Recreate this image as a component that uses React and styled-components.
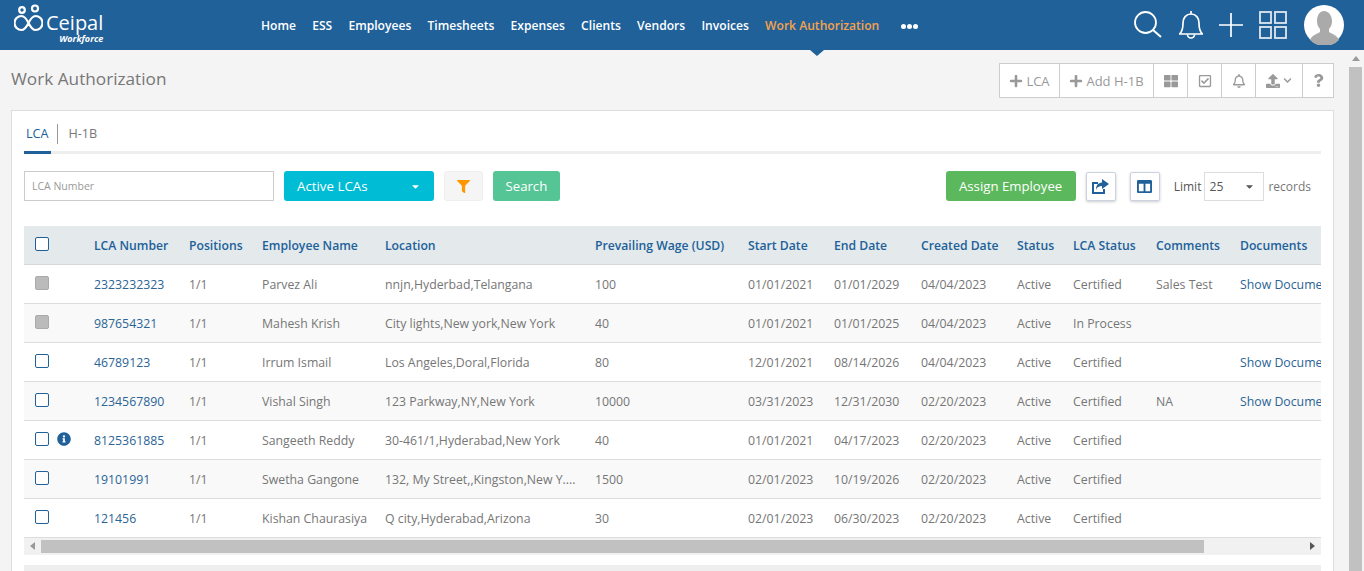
import React from "react";
import styled, { createGlobalStyle } from "styled-components";
import { FaPlus, FaThLarge, FaRegCheckSquare, FaRegBell, FaUpload, FaChevronDown, FaQuestion, FaFilter, FaColumns, FaInfoCircle, FaCaretDown } from "react-icons/fa";

const Global = createGlobalStyle`
  html, body { margin: 0; padding: 0; height: 100%; overflow: hidden; }
  body { font-family: "Open Sans", "Noto Sans", sans-serif; font-size: 12px; color: #777; background: #f4f4f4; }
  * { box-sizing: border-box; }
`;

const Header = styled.header`
  position: relative;
  height: 50px;
  background: #20619a;
  display: flex;
  align-items: center;
  color: #fff;
`;

const Logo = styled.div`
  width: 253px;
  padding-left: 14px;
  display: flex;
  align-items: flex-start;
  height: 50px;
  padding-top: 4px;
`;

const LogoText = styled.div`
  display: flex;
  flex-direction: column;
  align-items: flex-end;
  margin-left: 3px;
  margin-top: 8px;
`;

const LogoName = styled.span`
  font-size: 20px;
  line-height: 22px;
  font-weight: 400;
`;

const LogoSub = styled.span`
  font-size: 9px;
  line-height: 10px;
  font-weight: 700;
  font-style: italic;
`;

const Nav = styled.nav`
  display: flex;
  align-items: center;
  gap: 16.2px;
  padding-left: 8px;
  flex: 1;
`;

const NavItem = styled.a`
  font-size: 12.1px;
  font-weight: 600;
  color: ${(p) => (p.$active ? "#f5a24b" : "#fff")};
`;

const Dots = styled.span`
  display: flex;
  gap: 1px;
  margin-left: 5px;
  margin-top: 3px;
  i { width: 5px; height: 5px; border-radius: 50%; background: #fff; }
`;

const NavCaret = styled.span`
  position: absolute;
  left: 810px;
  top: 50px;
  border-left: 7px solid transparent;
  border-right: 7px solid transparent;
  border-top: 6px solid #20619a;
`;

const HeadIcons = styled.div`
  display: flex;
  align-items: center;
  gap: 16px;
  padding-right: 20px;
`;

const Page = styled.div`
  display: flex;
  height: 521px;
  overflow: hidden;
`;

const Main = styled.main`
  width: 1347px;
  padding: 13px 13px 0 11px;
`;

const TopRow = styled.div`
  display: flex;
  justify-content: space-between;
  height: 47px;
`;

const Title = styled.h1`
  margin: 6px 0 0;
  font-size: 17.2px;
  line-height: 20px;
  font-weight: 400;
  color: #777;
`;

const ActionBar = styled.div`
  display: flex;
  height: 35px;
  border: 1px solid #ccc;
  background: #fff;
`;

const ActionBtn = styled.div`
  width: ${(p) => p.$w}px;
  display: flex;
  align-items: center;
  justify-content: center;
  gap: 3px;
  color: #999;
  font-size: 13px;
  border-left: ${(p) => (p.$first ? "none" : "1px solid #ccc")};
`;

const Card = styled.section`
  background: #fff;
  border: 1px solid #ddd;
  border-bottom: none;
  padding: 0 12px;
  height: 470px;
`;

const Tabs = styled.div`
  display: flex;
  align-items: center;
  height: 43px;
  border-bottom: 3px solid #eee;
  position: relative;
  padding-top: 5px;
`;

const Tab = styled.span`
  font-size: 12.6px;
  padding: 0 9px 0 2px;
  color: ${(p) => (p.$active ? "#20619a" : "#777")};
  height: 20px;
  line-height: 20px;
  & + & { border-left: 1px solid #999; padding-left: 10px; }
`;

const TabBar = styled.span`
  position: absolute;
  left: 0;
  bottom: -3px;
  width: 27px;
  height: 3px;
  background: #20619a;
`;

const Tools = styled.div`
  display: flex;
  align-items: center;
  height: 30px;
  margin-top: 17px;
`;

const SearchInput = styled.input`
  width: 250px;
  height: 30px;
  border: 1px solid #ccc;
  padding: 0 7px;
  font: 10.5px "Open Sans", sans-serif;
  outline: none;
  &::placeholder { color: #999; opacity: 1; }
`;

const StatusSelect = styled.div`
  width: 150px;
  height: 30px;
  margin-left: 10px;
  border-radius: 3px;
  background: #00bcd4;
  color: #fff;
  font-size: 13.3px;
  display: flex;
  align-items: center;
  justify-content: space-between;
  padding: 0 13px;
`;

const FilterBtn = styled.div`
  width: 39px;
  height: 30px;
  margin-left: 10px;
  border: 1px solid #eee;
  border-radius: 3px;
  background: #f5f5f5;
  color: #ff9800;
  font-size: 13px;
  display: flex;
  align-items: center;
  justify-content: center;
`;

const Btn = styled.div`
  height: 30px;
  padding: 0 ${(p) => p.$pad}px;
  margin-left: 10px;
  border-radius: 3px;
  background: ${(p) => p.$bg};
  color: #fff;
  font-size: 13.2px;
  display: flex;
  align-items: center;
`;

const Spacer = styled.div`
  flex: 1;
`;

const IconBtn = styled.div`
  width: 30px;
  height: 29px;
  margin-left: ${(p) => p.$ml}px;
  border: 1px solid #ccd3e0;
  border-radius: 2px;
  box-shadow: 0 1px 3px rgba(0, 0, 0, 0.2);
  background: #fff;
  color: #20619a;
  font-size: 15px;
  display: flex;
  align-items: center;
  justify-content: center;
`;

const LimitText = styled.span`
  font-size: 12px;
  color: ${(p) => p.$c};
  margin: ${(p) => p.$m};
`;

const LimitSelect = styled.div`
  width: 60px;
  height: 29px;
  border: 1px solid #ddd;
  color: #555;
  font-size: 12.2px;
  display: flex;
  align-items: center;
  justify-content: space-between;
  padding: 0 8px 0 4px;
`;

const TableWrap = styled.div`
  margin-top: 25px;
  overflow: hidden;
  width: 1297px;
`;

const Table = styled.table`
  table-layout: fixed;
  border-collapse: collapse;
  width: 1380px;
  font-size: 12.3px;
`;

const Th = styled.th`
  height: 38px;
  padding: 1px 0 0 12px;
  text-align: left;
  font-weight: 600;
  font-size: 12.2px;
  color: #20619a;
  background: #e4e9ec;
  border-bottom: 1px solid #d5d9dc;
  white-space: nowrap;
`;

const Tr = styled.tr`
  background: ${(p) => (p.$odd ? "#f9f9f9" : "#fff")};
`;

const Td = styled.td`
  height: 39px;
  padding: 1px 0 0 12px;
  border-bottom: 1px solid #ddd;
  color: ${(p) => (p.$link ? "#2a6496" : "#767676")};
  white-space: nowrap;
  overflow: hidden;
`;

const CheckCell = styled.div`
  display: flex;
  align-items: center;
  gap: 8px;
  margin-left: -1px;
  position: relative;
  top: -1px;
`;

const Check = styled.span`
  width: 14px;
  height: 14px;
  border-radius: 2px;
  border: 1px solid ${(p) => (p.$off ? "#aaa" : "#20619a")};
  background: ${(p) => (p.$off ? "#bbb" : "#fff")};
`;

const HScroll = styled.div`
  height: 17px;
  background: #f1f1f1;
  display: flex;
  align-items: center;
`;

const Arrow = styled.span`
  width: 17px;
  display: flex;
  justify-content: center;
  &::before {
    content: "";
    border-top: 4px solid transparent;
    border-bottom: 4px solid transparent;
    ${(p) => (p.$right ? "border-left: 5px solid #555;" : "border-right: 5px solid #999;")}
  }
`;

const Thumb = styled.span`
  width: ${(p) => p.$w}px;
  height: 13px;
  background: #c1c1c1;
`;

const Strip = styled.div`
  margin-top: 10px;
  height: 20px;
  background: #eee;
`;

const VScroll = styled.aside`
  width: 17px;
  background: #f4f4f4;
  display: flex;
  flex-direction: column;
  align-items: center;
`;

const UpArrow = styled.span`
  margin-top: 6px;
  border-left: 4px solid transparent;
  border-right: 4px solid transparent;
  border-bottom: 5px solid #999;
`;

const VThumb = styled.span`
  flex: 1;
  width: 13px;
  margin-top: 6px;
  background: #c1c1c1;
`;

const navItems = ["Home", "ESS", "Employees", "Timesheets", "Expenses", "Clients", "Vendors", "Invoices"];

const columns = [
  ["", 58], ["LCA Number", 95], ["Positions", 73], ["Employee Name", 123], ["Location", 210],
  ["Prevailing Wage (USD)", 153], ["Start Date", 86], ["End Date", 87], ["Created Date", 96],
  ["Status", 56], ["LCA Status", 83], ["Comments", 84], ["Documents", 176],
];

const rows = [
  { off: true, n: "2323232323", name: "Parvez Ali", loc: "nnjn,Hyderbad,Telangana", wage: "100", s: "01/01/2021", e: "01/01/2029", c: "04/04/2023", st: "Certified", com: "Sales Test", doc: true },
  { off: true, n: "987654321", name: "Mahesh Krish", loc: "City lights,New york,New York", wage: "40", s: "01/01/2021", e: "01/01/2025", c: "04/04/2023", st: "In Process" },
  { n: "46789123", name: "Irrum Ismail", loc: "Los Angeles,Doral,Florida", wage: "80", s: "12/01/2021", e: "08/14/2026", c: "04/04/2023", st: "Certified", doc: true },
  { n: "1234567890", name: "Vishal Singh", loc: "123 Parkway,NY,New York", wage: "10000", s: "03/31/2023", e: "12/31/2030", c: "02/20/2023", st: "Certified", com: "NA", doc: true },
  { info: true, n: "8125361885", name: "Sangeeth Reddy", loc: "30-461/1,Hyderabad,New York", wage: "40", s: "01/01/2021", e: "04/17/2023", c: "02/20/2023", st: "Certified" },
  { n: "19101991", name: "Swetha Gangone", loc: "132, My Street,,Kingston,New Y....", wage: "1500", s: "02/01/2023", e: "10/19/2026", c: "02/20/2023", st: "Certified" },
  { n: "121456", name: "Kishan Chaurasiya", loc: "Q city,Hyderabad,Arizona", wage: "30", s: "02/01/2023", e: "06/30/2023", c: "02/20/2023", st: "Certified" },
];

const LogoMark = () => (
  <svg width="29" height="29" viewBox="0 0 29 29" fill="none" stroke="#fff" strokeWidth="2.2">
    <circle cx="8" cy="6" r="2.8" />
    <circle cx="21" cy="4.500" r="3" />
    <path d="M14.500 19c-2-4-4-7-7-7a7 7 0 0 0 0 14c3 0 5-3 7-7s4-7 7-7a7 7 0 0 1 0 14c-3 0-5-3-7-7z" />
  </svg>
);

const ShareIcon = () => (
  <svg width="17" height="15" viewBox="0 0 17 15" fill="#20619a">
    <path d="M0 3h6v2H2v8h9v-3h2v5H0z" />
    <path d="M10 0l7 5-7 5V7C7 7 5 8 4 11c0-5 2-7 6-7.500z" />
  </svg>
);

const HeaderIcons = () => (
  <HeadIcons>
    <svg width="30" height="30" viewBox="0 0 30 30" fill="none" stroke="#fff" strokeWidth="1.8">
      <circle cx="12.5" cy="12.5" r="10.5" />
      <path d="M20 20l8 7" strokeWidth="2" />
    </svg>
    <svg width="24" height="32" viewBox="1 0 24 32" fill="none" stroke="#fff" strokeWidth="1.7">
      <path d="M13 2v3M13 5c-5 0-8 4-8 9 0 6-1 9-3.500 11h23c-2.500-2-3.500-5-3.500-11 0-5-3-9-8-9z" />
      <path d="M9.500 25.500a3.500 3.500 0 0 0 7 0" />
    </svg>
    <svg width="24" height="24" viewBox="0 0 24 24" stroke="#fff" strokeWidth="1.7">
      <path d="M12 0v24M0 12h24" />
    </svg>
    <svg width="29" height="29" viewBox="0 0 29 29" fill="none" stroke="#dfe7f0" strokeWidth="1.8">
      <rect x="1" y="1" width="11" height="11" />
      <rect x="16" y="1" width="11" height="11" />
      <rect x="1" y="16" width="11" height="11" />
      <rect x="16" y="16" width="11" height="11" />
    </svg>
    <svg width="40" height="40" viewBox="0 0 40 40">
      <circle cx="20" cy="20" r="20" fill="#fff" />
      <path d="M6 35c2-5 7-6 10-8v-3c-2-2-3-5-3-8 0-6 3-10 7-10s8 4 8 10c0 3-1 6-3 8v3c3 2 8 3 10 8a20 20 0 0 1-29 0z" fill="#aaa" />
    </svg>
  </HeadIcons>
);

const App = () => {
  return (
    <>
      <Global />
      <Header>
        <Logo>
          <LogoMark />
          <LogoText>
            <LogoName>Ceipal</LogoName>
            <LogoSub>Workforce</LogoSub>
          </LogoText>
        </Logo>
        <Nav>
          {navItems.map((n) => <NavItem key={n}>{n}</NavItem>)}
          <NavItem $active>Work Authorization</NavItem>
          <Dots><i /><i /><i /></Dots>
        </Nav>
        <NavCaret />
        <HeaderIcons />
      </Header>
      <Page>
        <Main>
          <TopRow>
            <Title>Work Authorization</Title>
            <ActionBar>
              <ActionBtn $first $w={59}><FaPlus size={14} />LCA</ActionBtn>
              <ActionBtn $w={94}><FaPlus size={14} />Add H-1B</ActionBtn>
              <ActionBtn $w={34}><FaThLarge size={14} /></ActionBtn>
              <ActionBtn $w={34}><FaRegCheckSquare size={14} /></ActionBtn>
              <ActionBtn $w={34}><FaRegBell size={14} /></ActionBtn>
              <ActionBtn $w={47}><FaUpload size={14} /><FaChevronDown size={9} /></ActionBtn>
              <ActionBtn $w={31}><FaQuestion size={13} /></ActionBtn>
            </ActionBar>
          </TopRow>
          <Card>
            <Tabs>
              <Tab $active>LCA<TabBar /></Tab>
              <Tab>H-1B</Tab>
            </Tabs>
            <Tools>
              <SearchInput placeholder="LCA Number" />
              <StatusSelect>Active LCAs<FaCaretDown size={11} /></StatusSelect>
              <FilterBtn><FaFilter /></FilterBtn>
              <Btn $bg="#56c596" $pad={12.5}>Search</Btn>
              <Spacer />
              <Btn $bg="#5cb85c" $pad={13.5}>Assign Employee</Btn>
              <IconBtn $ml={10}><ShareIcon /></IconBtn>
              <IconBtn $ml={14}><FaColumns /></IconBtn>
              <LimitText $c="#555" $m="0 3px 0 14px">Limit</LimitText>
              <LimitSelect>25<FaCaretDown size={11} /></LimitSelect>
              <LimitText $c="#777" $m="0 10px 0 4px">records</LimitText>
            </Tools>
            <TableWrap>
              <Table>
                <colgroup>
                  {columns.map(([h, w], i) => <col key={i} style={{ width: w }} />)}
                </colgroup>
                <thead>
                  <tr>
                    {columns.map(([h], i) => (
                      <Th key={i}>{i === 0 ? <CheckCell><Check /></CheckCell> : h}</Th>
                    ))}
                  </tr>
                </thead>
                <tbody>
                  {rows.map((r, i) => (
                    <Tr key={r.n} $odd={i % 2 === 1}>
                      <Td>
                        <CheckCell>
                          <Check $off={r.off} />
                          {r.info && <FaInfoCircle size={14} color="#20619a" />}
                        </CheckCell>
                      </Td>
                      <Td $link>{r.n}</Td>
                      <Td>1/1</Td>
                      <Td>{r.name}</Td>
                      <Td>{r.loc}</Td>
                      <Td>{r.wage}</Td>
                      <Td>{r.s}</Td>
                      <Td>{r.e}</Td>
                      <Td>{r.c}</Td>
                      <Td>Active</Td>
                      <Td>{r.st}</Td>
                      <Td>{r.com}</Td>
                      <Td $link>{r.doc ? "Show Documents" : ""}</Td>
                    </Tr>
                  ))}
                </tbody>
              </Table>
            </TableWrap>
            <HScroll>
              <Arrow />
              <Thumb $w={1163} />
              <Spacer />
              <Arrow $right />
            </HScroll>
            <Strip />
          </Card>
        </Main>
        <VScroll>
          <UpArrow />
          <VThumb />
        </VScroll>
      </Page>
    </>
  );
};

export default App;
